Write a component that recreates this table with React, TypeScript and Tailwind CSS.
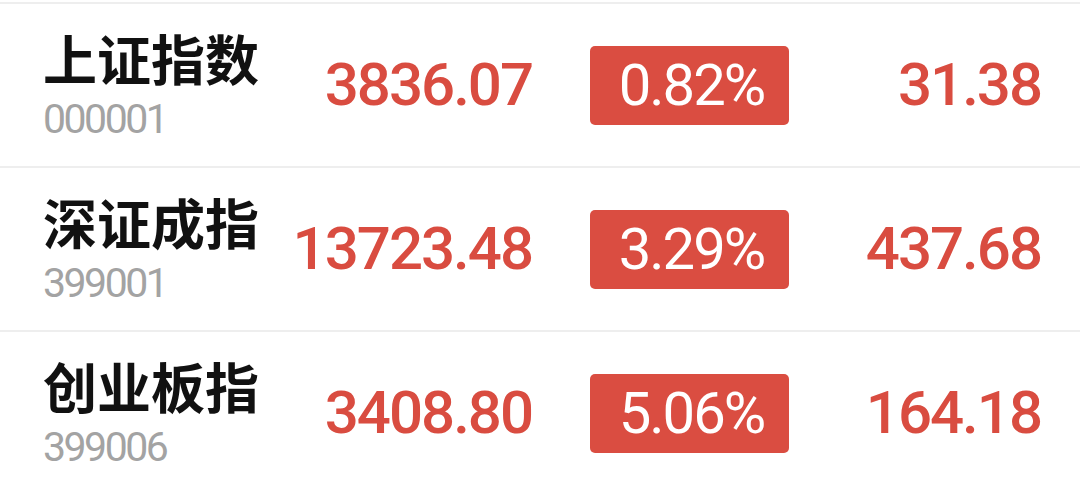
const rows = [
  { name: "上证指数", code: "000001", price: "3836.07", pct: "0.82%", chg: "31.38" },
  { name: "深证成指", code: "399001", price: "13723.48", pct: "3.29%", chg: "437.68" },
  { name: "创业板指", code: "399006", price: "3408.80", pct: "5.06%", chg: "164.18" },
];

const App = () => {
  return (
    <div className="w-[1080px] h-[494px] bg-white overflow-hidden pt-[2px] font-['Roboto',sans-serif]">
      {rows.map((r) => (
        <div
          key={r.code}
          className="h-[164px] border-t-2 border-[#eeeeee] flex items-center pl-[43px] pr-[39px]"
        >
          {/* name + code */}
          <div className="w-[237px] flex flex-col">
            <div className="font-['Noto_Sans_CJK_SC',sans-serif] text-[54px] leading-none font-bold text-[#111111]">
              {r.name}
            </div>
            <div className="mt-[14px] text-[41px] leading-none tracking-[-2.5px] text-[#a3a3a3]">
              {r.code}
            </div>
          </div>

          <div className="w-[252px] text-right text-[60px] leading-none font-medium tracking-[-2px] text-[#d94c40]">
            {r.price}
          </div>

          <div className="ml-[58px] w-[199px] h-[79px] rounded-[5px] bg-[#da4d41] flex items-center justify-center pl-[4px] text-white text-[58px] leading-none tracking-[-2px]">
            {r.pct}
          </div>

          <div className="flex-1 text-right text-[60px] leading-none font-medium tracking-[-2px] text-[#d94c40]">
            {r.chg}
          </div>
        </div>
      ))}
    </div>
  );
};

export default App;
